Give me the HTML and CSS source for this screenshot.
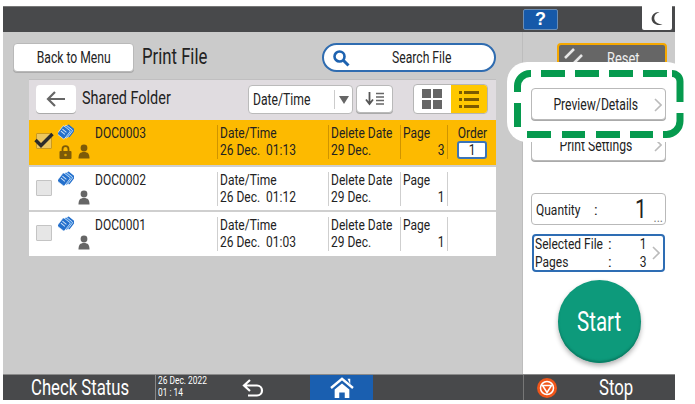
FILE: index.html
```html
<!DOCTYPE html>
<html lang="en">
<head>
<meta charset="utf-8">
<title>Print File</title>
<link rel="stylesheet" href="styles.css">
</head>
<body>
<svg width="0" height="0" class="defs">
  <symbol id="doc" viewBox="0 0 16 16">
    <g transform="rotate(38 8 8)">
      <rect x="5" y="0.500" width="9" height="10" rx="1" fill="#2470cc"/>
      <rect x="3.500" y="2.500" width="9" height="10" rx="1" fill="#3a8ae0" stroke="#fff" stroke-width=".6"/>
      <rect x="2" y="4.500" width="9" height="10.500" rx="1" fill="#2470cc" stroke="#fff" stroke-width=".6"/>
      <path d="M3.500 8h5M3.500 10.500h5" stroke="#cfe3f8" stroke-width="1"/>
    </g>
  </symbol>
  <symbol id="user" viewBox="0 0 12 15">
    <circle cx="6" cy="4" r="3.400"/>
    <path d="M0.500 14.500c0-4.500 1.500-6.500 5.500-6.500s5.500 2 5.500 6.500z"/>
  </symbol>
</svg>
<main class="screen">
  <header class="topbar">
    <button class="help">?</button>
    <button class="sleep">
      <svg width="14" height="15" viewBox="0 0 14 15"><path d="M9.500 1C5.500 2.500 4 5 4.300 7.700 4.600 10.700 7.500 13.300 12.500 13.200 8 15.500 1.800 13 1.600 7.800 1.500 4 5 .5 9.500 1z" fill="#444"/></svg>
    </button>
  </header>
  <div class="content">
    <section class="left">
      <div class="title-row">
        <button class="btn back-menu"><span class="t mid">Back to Menu</span></button>
        <h1 class="title"><span class="t">Print File</span></h1>
        <button class="search">
          <svg width="18" height="18" viewBox="0 0 18 18"><circle cx="7.500" cy="7.500" r="5" fill="none" stroke="#1d62b0" stroke-width="2.600"/><path d="M11.500 11.500l5 5" stroke="#1d62b0" stroke-width="3"/></svg>
          <span class="t search-label">Search File</span>
        </button>
      </div>
      <div class="list">
        <div class="list-head">
          <button class="btn arrow-btn">
            <svg width="20" height="16" viewBox="0 0 20 16"><path d="M1.500 8H19M9 1L2 8l7 7" fill="none" stroke="#666" stroke-width="2.200"/></svg>
          </button>
          <span class="folder"><span class="t">Shared Folder</span></span>
          <div class="select"><span class="select-text"><span class="t">Date/Time</span></span><span class="select-arrow"><svg width="10" height="8" viewBox="0 0 10 8"><path d="M0 0h10L5 8z" fill="#666"/></svg></span></div>
          <button class="btn sort-btn">
            <svg width="20" height="14" viewBox="0 0 20 14"><path d="M4.500 0v11M1 7.500l3.500 4.500L8 7.500" fill="none" stroke="#555" stroke-width="1.800"/><path d="M11 1.500h8M11 5h8M11 8.500h8M11 12h8" stroke="#666" stroke-width="1.300"/></svg>
          </button>
          <div class="toggle">
            <span class="toggle-cell">
              <svg width="20" height="20" viewBox="0 0 20 20" fill="#666"><rect width="9" height="9"/><rect x="11" width="9" height="9"/><rect y="11" width="9" height="9"/><rect x="11" y="11" width="9" height="9"/></svg>
            </span>
            <span class="toggle-cell on">
              <svg width="20" height="17" viewBox="0 0 20 17" fill="#7a5a00"><rect y="0" width="3" height="3"/><rect x="5" y="0" width="15" height="3"/><rect y="7" width="3" height="3"/><rect x="5" y="7" width="15" height="3"/><rect y="14" width="3" height="3"/><rect x="5" y="14" width="15" height="3"/></svg>
            </span>
          </div>
        </div>
        <div class="row selected">
          <span class="check"><svg class="tick" width="20" height="16" viewBox="0 0 20 16"><path d="M1.500 8l5.500 5.500L18.500 2" fill="none" stroke="#2b2b2b" stroke-width="3.400"/></svg></span>
          <div class="icons">
            <svg class="doc" width="16" height="16"><use href="#doc"/></svg>
            <div class="icons-low">
              <svg width="13" height="14" viewBox="0 0 13 14" class="lock"><path d="M3.500 6V4.200a3 3 0 0 1 6 0V6" fill="none" stroke-width="1.800"/><rect x="0.500" y="6" width="12" height="8" rx="1" stroke="none"/><circle cx="6.500" cy="10" r="1.300" fill="#e0a400" stroke="none"/></svg>
              <svg class="user" width="12" height="15"><use href="#user"/></svg>
            </div>
          </div>
          <span class="name"><span class="t">DOC0003</span></span>
          <div class="cell c-date"><span class="line"><span class="t">Date/Time</span></span><span class="line"><span class="t">26 Dec.&nbsp;&nbsp;01:13</span></span></div>
          <div class="cell c-del"><span class="line"><span class="t">Delete Date</span></span><span class="line"><span class="t">29 Dec.</span></span></div>
          <div class="cell c-page"><span class="line"><span class="t">Page</span></span><span class="line num"><span class="t end">3</span></span></div>
          <div class="cell c-order"><span class="line"><span class="t mid">Order</span></span><span class="order-box"><span class="t mid">1</span></span></div>
        </div>
        <div class="row">
          <span class="check"></span>
          <div class="icons">
            <svg class="doc" width="16" height="16"><use href="#doc"/></svg>
            <div class="icons-low only-user"><svg class="user" width="12" height="15"><use href="#user"/></svg></div>
          </div>
          <span class="name"><span class="t">DOC0002</span></span>
          <div class="cell c-date"><span class="line"><span class="t">Date/Time</span></span><span class="line"><span class="t">26 Dec.&nbsp;&nbsp;01:12</span></span></div>
          <div class="cell c-del"><span class="line"><span class="t">Delete Date</span></span><span class="line"><span class="t">29 Dec.</span></span></div>
          <div class="cell c-page"><span class="line"><span class="t">Page</span></span><span class="line num"><span class="t end">1</span></span></div>
          <div class="cell c-order"></div>
        </div>
        <div class="row">
          <span class="check"></span>
          <div class="icons">
            <svg class="doc" width="16" height="16"><use href="#doc"/></svg>
            <div class="icons-low only-user"><svg class="user" width="12" height="15"><use href="#user"/></svg></div>
          </div>
          <span class="name"><span class="t">DOC0001</span></span>
          <div class="cell c-date"><span class="line"><span class="t">Date/Time</span></span><span class="line"><span class="t">26 Dec.&nbsp;&nbsp;01:03</span></span></div>
          <div class="cell c-del"><span class="line"><span class="t">Delete Date</span></span><span class="line"><span class="t">29 Dec.</span></span></div>
          <div class="cell c-page"><span class="line"><span class="t">Page</span></span><span class="line num"><span class="t end">1</span></span></div>
          <div class="cell c-order"></div>
        </div>
      </div>
    </section>
    <aside class="side">
      <div class="side-top">
        <button class="reset">
          <svg width="20" height="18" viewBox="0 0 20 18"><path d="M1 10L10 1M8 17L18 7" stroke="#e6e6e6" stroke-width="2.600"/></svg>
          <span class="t reset-label">Reset</span>
        </button>
      </div>
      <div class="side-body">
        <button class="btn wide spotlight"><span class="t mid">Preview/Details</span><svg class="chev" width="8" height="14" viewBox="0 0 8 14"><path d="M1 1l6 6-6 6" fill="none" stroke="#bbb" stroke-width="1.600"/></svg></button>
        <button class="btn wide tall"><span class="t mid">Print Settings</span><svg class="chev" width="8" height="14" viewBox="0 0 8 14"><path d="M1 1l6 6-6 6" fill="none" stroke="#bbb" stroke-width="1.600"/></svg></button>
        <div class="qty">
          <span class="qty-label"><span class="t">Quantity</span></span><span class="qty-colon">:</span><span class="qty-val"><span class="t end">1</span></span><span class="dots">...</span>
        </div>
        <div class="sel">
          <div class="sel-grid">
            <span class="sel-name"><span class="t">Selected File</span></span><span class="colon">:</span><span class="sel-val"><span class="t end">1</span></span>
            <span class="sel-name"><span class="t">Pages</span></span><span class="colon">:</span><span class="sel-val"><span class="t end">3</span></span>
          </div>
          <svg class="sel-chev" width="8" height="14" viewBox="0 0 8 14"><path d="M1 1l6 6-6 6" fill="none" stroke="#bbb" stroke-width="1.600"/></svg>
        </div>
        <button class="start"><span class="t mid">Start</span></button>
      </div>
    </aside>
  </div>
  <footer class="bottombar">
    <span class="status"><span class="t">Check Status</span></span>
    <span class="clock"><span><span class="t">26 Dec. 2022</span></span><span><span class="t">01 : 14</span></span></span>
    <span class="undo">
      <svg width="23" height="18" viewBox="0 0 23 18"><path d="M8 1L2 6.500 8 12M2.500 6.500H15a5 5 0 0 1 0 10H6" fill="none" stroke="#fff" stroke-width="2.200"/></svg>
    </span>
    <span class="home">
      <svg width="24" height="22" viewBox="0 0 26 24"><path d="M1 12L13 2l12 10" fill="none" stroke="#fff" stroke-width="2.600"/><path d="M19 2h3v6" fill="#fff"/><path d="M5 13.500L13 7l8 6.500V23h-5v-6h-6v6H5z" fill="#fff"/></svg>
    </span>
    <span class="stop-zone">
      <svg width="20" height="20" viewBox="0 0 20 20"><circle cx="10" cy="10" r="10" fill="#f0561a"/><circle cx="10" cy="10" r="6.500" fill="none" stroke="#fff" stroke-width="1.500"/><path d="M5.500 7.500h9L10 14.500z" fill="none" stroke="#fff" stroke-width="1.500"/></svg>
      <span class="t stop-label">Stop</span>
    </span>
  </footer>
</main>
<div class="callout">
  <svg width="180" height="80" viewBox="0 0 180 80">
    <g fill="none" stroke="#069a4e" stroke-width="7">
      <path d="M34 11.500H58M68 11.500H92M102 11.500H126M136 11.500H160"/>
      <path d="M165 11.500a8 8 0 0 1 8 8V40"/>
      <path d="M173 51v8a13.500 13.500 0 0 1-13.500 13.500H156"/>
      <path d="M20 72.500H44M55 72.500H78M89 72.500H113M123 72.500H146"/>
      <path d="M10.500 30V24a12.500 12.500 0 0 1 12.500-12.500H24"/>
      <path d="M10.500 41V65"/>
    </g>
  </svg>
</div>
</body>
</html>
```
FILE: styles.css
```css
* { box-sizing: border-box; }
html, body { margin: 0; padding: 0; background: #fff; }
body {
  width: 695px;
  height: 404px;
  padding: 6px 0 0 3px;
  overflow: hidden;
  position: relative;
  font-family: Roboto, "Liberation Sans", sans-serif;
  color: #222;
}
button { font: inherit; color: inherit; padding: 0; }
.defs { position: absolute; }

/* Condensed display type: no condensed family is installed, so text is squeezed. */
.t {
  display: inline-block;
  white-space: nowrap;
  transform: scaleX(.76);
  transform-origin: left center;
}
.t.mid { transform-origin: center; }
.t.end { transform-origin: right center; }
.row .t, .sel .t, .qty .t { transform: scaleX(.8); }

.screen {
  width: 672px;
  height: 394px;
  display: flex;
  flex-direction: column;
  background: #cbcbcb;
}
.topbar {
  height: 26px;
  flex: none;
  background: #48494b;
  border-top: 1px solid #777;
  display: flex;
  justify-content: flex-end;
  align-items: flex-start;
  padding-right: 3px;
}
.help {
  width: 35px;
  height: 21px;
  margin: 2px 84px 0 0;
  background: #1659a9;
  border: 1px solid #6a8db5;
  border-radius: 2px;
  color: #fff;
  font-family: "Liberation Sans", sans-serif;
  font-weight: 700;
  font-size: 18px;
  line-height: 19px;
}
.sleep {
  width: 30px;
  height: 24px;
  margin-top: -1px;
  background: #fff;
  border: 0;
  border-radius: 0 0 2px 2px;
  display: flex;
  align-items: center;
  justify-content: center;
}

.content { flex: 1; display: flex; min-height: 0; }
.left { width: 519px; flex: none; padding: 11px 0 0 10px; }
.title-row { display: flex; align-items: flex-start; height: 30px; }
.btn {
  background: #fff;
  border: 1px solid #b9b9b9;
  border-radius: 4px;
  box-shadow: 0 1px 0 #aaa;
}
.back-menu { width: 121px; height: 29px; font-size: 16px; line-height: 27px; }
.title {
  margin: 0 0 0 8px;
  width: 180px;
  font-weight: 400;
  font-size: 22px;
  line-height: 27px;
}
.search {
  width: 174px;
  height: 29px;
  background: #fff;
  border: 2px solid #2f6cb0;
  border-radius: 15px;
  display: flex;
  align-items: center;
  padding-left: 8px;
  font-size: 16px;
}
.search-label { margin-left: 42px; }

.list { margin: 6px 0 0 16px; width: 467px; background: #cfcfcf; border-top: 1px solid #c0bfc0; }
.list-head {
  height: 40px;
  background: #e0dce0;
  display: flex;
  align-items: flex-start;
  padding: 5px 0 0 7px;
}
.arrow-btn {
  width: 40px;
  height: 28px;
  border: 0;
  display: flex;
  align-items: center;
  justify-content: center;
}
.folder { width: 166px; margin-left: 6px; font-size: 19px; line-height: 26px; }
.select {
  width: 105px;
  height: 29px;
  background: #fff;
  border: 1px solid #bbb;
  border-radius: 4px;
  display: flex;
  align-items: center;
  font-size: 16px;
}
.select-text { width: 85px; padding-left: 4px; }
.select-arrow {
  flex: 1;
  height: 19px;
  border-left: 1px solid #ccc;
  display: flex;
  align-items: center;
  justify-content: center;
}
.sort-btn {
  width: 37px;
  height: 28px;
  margin-left: 3px;
  display: flex;
  align-items: center;
  justify-content: center;
}
.toggle {
  width: 75px;
  height: 30px;
  margin: -1px 0 0 20px;
  display: flex;
  border: 1px solid #b5b5b5;
  border-radius: 4px;
  overflow: hidden;
  background: #fff;
}
.toggle-cell { flex: 1; display: flex; align-items: center; justify-content: center; }
.toggle-cell.on { background: #ffc800; }

.row {
  height: 43px;
  margin-bottom: 2px;
  background: #fff;
  display: flex;
  align-items: flex-start;
  font-size: 15px;
  line-height: 16px;
}
.row.selected { height: 45px; background: #fdba00; }
.row:last-child { margin-bottom: 0; height: 44px; }
.check {
  position: relative;
  width: 16px;
  height: 16px;
  flex: none;
  margin: 13px 0 0 7px;
  background: #e6e6e6;
  border: 1px solid #c4c4c4;
  border-radius: 1px;
}
.selected .check { background: #ecc65e; border-color: #c99a20; }
.tick { position: absolute; left: -3px; top: -2px; }
.icons { width: 37px; flex: none; margin-left: 6px; padding-top: 4px; }
.doc { display: block; }
.icons-low { display: flex; gap: 6px; margin-top: 4px; align-items: flex-end; padding-left: 1px; }
.only-user { padding-left: 20px; margin-top: 3px; }
.user { fill: #666; display: block; }
.selected .user { fill: #7c5a08; }
.lock { fill: #7c5a08; stroke: #7c5a08; display: block; }
.name { width: 122px; flex: none; padding-top: 5px; }
.cell {
  display: flex;
  flex-direction: column;
  margin-top: 5px;
  height: 34px;
  padding-left: 2px;
  border-left: 1px solid #cfcfcf;
  flex: none;
  white-space: nowrap;
}
.selected .cell { border-left-color: #cf9400; }
.line { display: block; height: 18px; }
.c-date { width: 111px; }
.c-del { width: 72px; }
.c-page { width: 47px; padding-right: 3px; }
.num { text-align: right; }
.c-order { flex: 1; align-items: center; padding: 0; }
.order-box {
  display: block;
  width: 30px;
  height: 18px;
  background: #fff;
  border: 2px solid #3b74b8;
  border-radius: 3px;
  text-align: center;
  line-height: 14px;
}

.side { flex: 1; display: flex; flex-direction: column; border-left: 1px solid #bdbdbd; }
.side-top { height: 48px; padding: 11px 8px 0 34px; }
.reset {
  width: 110px;
  height: 32px;
  background: #666;
  border: 2px solid #f5a800;
  border-radius: 4px;
  color: #eee;
  display: flex;
  align-items: flex-start;
  padding: 3px 0 0 5px;
  font-size: 17px;
  line-height: 20px;
}
.reset-label { margin-left: 23px; }
.side-body { flex: 1; background: #fff; padding: 8px 0 0 8px; }
.wide {
  display: flex;
  width: 135px;
  height: 32px;
  padding-right: 6px;
  align-items: center;
  justify-content: center;
  position: relative;
  font-size: 16px;
}
.spotlight { z-index: 2; }
.tall { height: 33px; margin-top: 8px; padding-top: 2px; }
.chev { position: absolute; right: 3px; top: 9px; }
.qty {
  position: relative;
  display: flex;
  align-items: center;
  width: 135px;
  height: 32px;
  margin-top: 32px;
  padding-left: 4px;
  background: #fff;
  border: 1px solid #b9b9b9;
  border-radius: 4px;
  font-size: 15px;
}
.qty-label { width: 58px; flex: none; padding-top: 1px; }
.qty-colon { margin: 0; padding-top: 1px; }
.qty-val { margin-left: auto; margin-right: 18px; font-size: 26px; line-height: 28px; }
.dots { position: absolute; right: 2px; bottom: 1px; font-size: 12px; line-height: 10px; color: #777; }
.sel {
  display: flex;
  align-items: center;
  width: 133px;
  height: 38px;
  margin: 9px 0 0 1px;
  padding: 0 3px 0 0;
  border: 2px solid #2e6db4;
  border-radius: 4px;
  font-size: 15px;
  line-height: 18px;
}
.sel-grid { display: grid; grid-template-columns: 74px 18px 20px; flex: none; }
.sel-name { padding-left: 1px; overflow: visible; width: 70px; }
.sel-val { text-align: right; }
.sel-chev { margin-left: auto; }
.start {
  display: block;
  width: 83px;
  height: 83px;
  margin: 8px 0 0 27px;
  background: #0d9a7b;
  border: 0;
  border-radius: 50%;
  box-shadow: inset 0 -2px 2px #0a7d64, 0 3px 5px rgba(0, 0, 0, .3);
  color: #fff;
  font-size: 27px;
}

.bottombar {
  height: 26px;
  flex: none;
  background: #48494b;
  border-top: 1px solid #8a8a8a;
  color: #fff;
  display: flex;
  align-items: center;
}
.status { width: 152px; padding-left: 28px; font-size: 22px; white-space: nowrap; }
.clock {
  width: 72px;
  height: 25px;
  padding-left: 2px;
  border-left: 1px solid #888;
  display: flex;
  flex-direction: column;
  font-size: 11px;
  line-height: 12px;
}
.undo { width: 83px; display: flex; padding-left: 15px; }
.home {
  width: 63px;
  height: 25px;
  background: #1a5fb0;
  display: flex;
  align-items: center;
  justify-content: center;
}
.stop-zone {
  margin-left: 150px;
  flex: 1;
  height: 25px;
  border-left: 1px solid #777;
  display: flex;
  align-items: center;
  padding-left: 13px;
}
.stop-label { margin-left: 42px; font-size: 22px; }

.callout {
  position: absolute;
  left: 507px;
  top: 62px;
  width: 180px;
  height: 80px;
  background: #fff;
  border-radius: 20px;
  z-index: 1;
}
```
